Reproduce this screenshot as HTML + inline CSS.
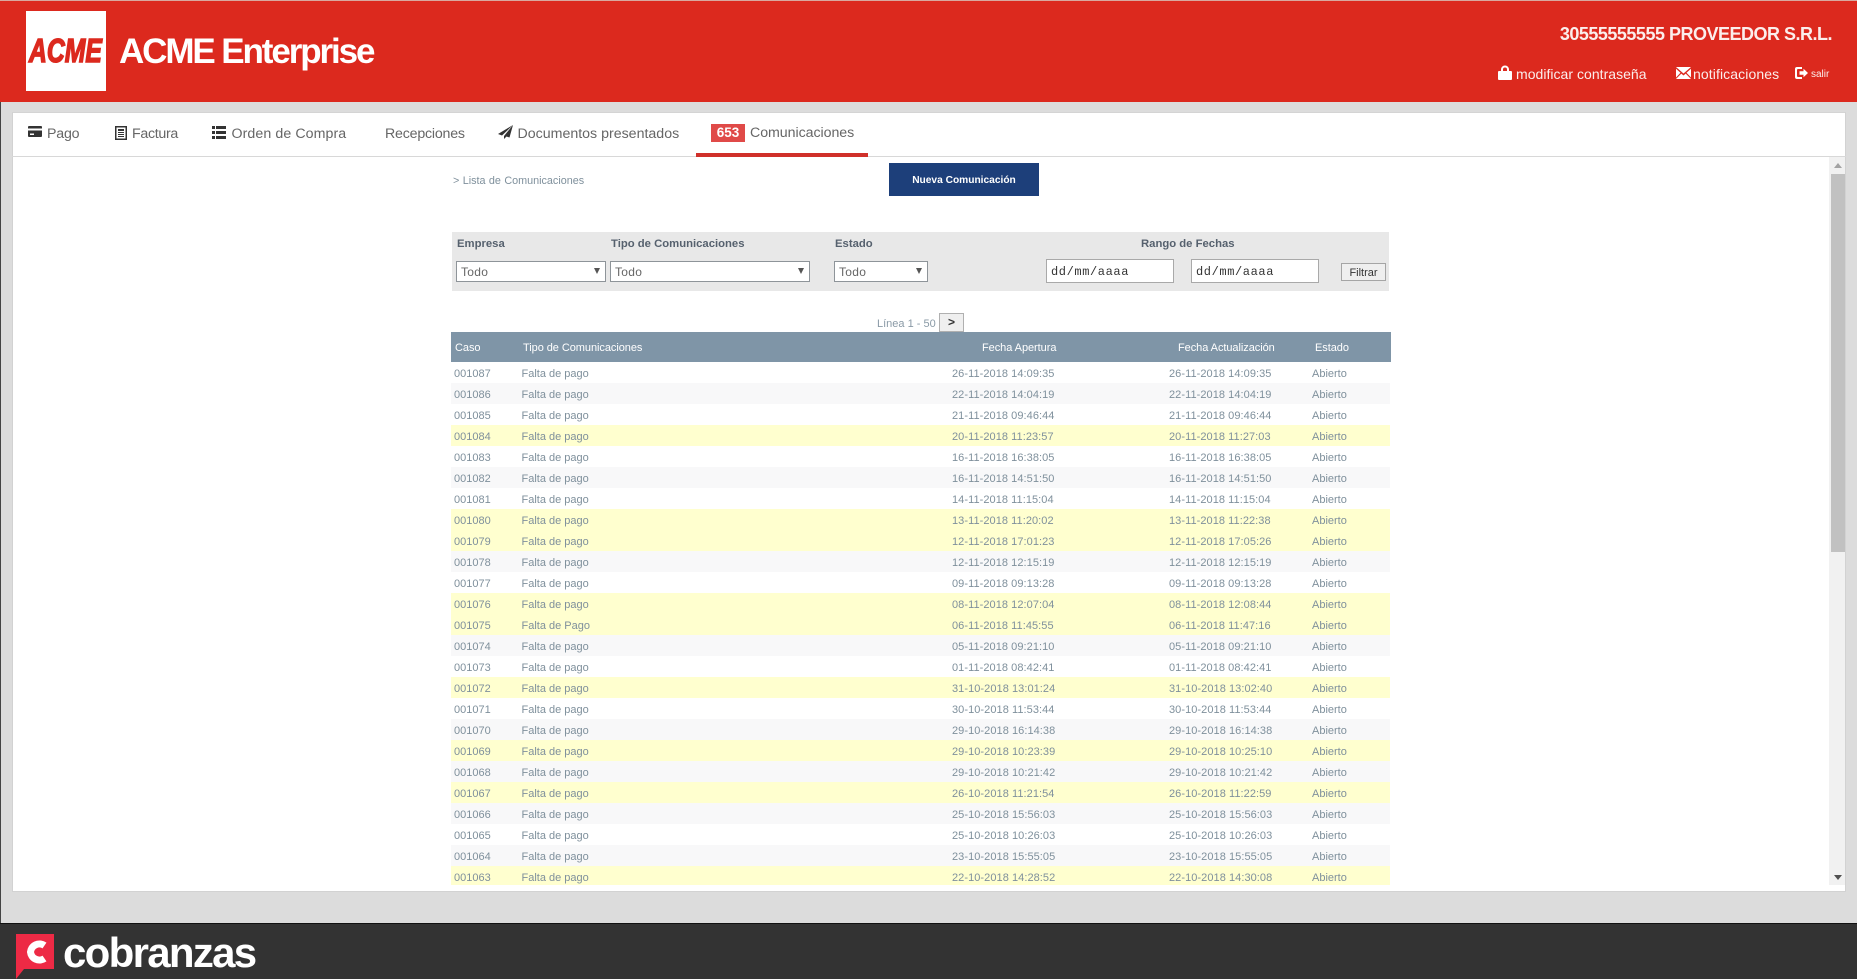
<!DOCTYPE html>
<html lang="es"><head><meta charset="utf-8"><title>ACME Enterprise</title>
<style>
*{box-sizing:border-box}
html,body{margin:0;padding:0;width:1857px;height:979px;overflow:hidden;background:#dcdcdc;font-family:"Liberation Sans",sans-serif}
.a{position:absolute;white-space:nowrap}
#top{position:absolute;left:0;top:0;width:1857px;height:102px;background:#dc291e;border-top:1px solid #d9a89f}
#edge{position:absolute;left:0;top:102px;width:1px;height:822px;background:#444}
#logo{position:absolute;left:26px;top:11px;width:80px;height:80px;background:#fff;overflow:hidden}
#panel{position:absolute;left:12px;top:112px;width:1834px;height:780px;background:#fff;border:1px solid #d2d2d2;border-top-color:#d4d4d4}
#navline{position:absolute;left:12px;top:156px;width:1834px;height:1px;background:#d8d8d8}
.tab{position:absolute;top:125px;font-size:14.2px;line-height:18px;color:#666;white-space:nowrap}
#clip{position:absolute;left:12px;top:157px;width:1818px;height:728px;overflow:hidden}
.r{position:absolute;left:439px;width:939px;height:21px;font-size:11px;line-height:21px;color:#7f909c}
.r span{position:absolute;white-space:nowrap;top:2px}
.r span:nth-child(1){left:3px}.r span:nth-child(2){left:70.500px}.r span:nth-child(3){left:501px;letter-spacing:.06px}.r span:nth-child(4){left:718px;letter-spacing:.06px}.r span:nth-child(5){left:861px}
.s{background:#f8f8f9}.y{background:#ffffcf}
.lbl{position:absolute;top:237px;font-size:11.300px;line-height:14px;font-weight:bold;color:#56616e;white-space:nowrap}
.sel{position:absolute;top:261px;height:21px;background:#fff;border:1px solid #8e9499;font-size:12px;line-height:21px;color:#666;padding-left:4px;letter-spacing:.3px}
.sel i{position:absolute;right:5px;top:6px;width:0;height:0;border-left:3.500px solid transparent;border-right:3.500px solid transparent;border-top:6px solid #555}
.dt{position:absolute;top:259px;height:24px;background:#fff;border:1px solid #a9a9a9;font-family:"Liberation Mono",monospace;font-size:12px;line-height:24px;color:#333;padding-left:4px;letter-spacing:.6px}
.th{position:absolute;top:333px;font-size:11px;line-height:30px;color:#fff;white-space:nowrap;letter-spacing:-.06px}
</style></head><body>
<div id="top"></div>
<div id="edge"></div>
<div id="logo"><div class="a" style="left:3px;top:20px;font:italic bold 33px/40px 'Liberation Sans',sans-serif;color:#dc291e;-webkit-text-stroke:1.5px #dc291e;transform:scaleX(.75);transform-origin:0 0">ACME</div></div>
<div class="a" style="left:119px;top:31px;font-size:35px;line-height:42px;font-weight:bold;color:#fff;letter-spacing:-2.1px">ACME Enterprise</div>
<div class="a" style="right:25px;top:23px;font-size:18px;line-height:22px;font-weight:bold;color:#fbeeec;letter-spacing:-.5px">30555555555 PROVEEDOR S.R.L.</div>

<svg class="a" style="left:1498px;top:65px" width="14" height="15" viewBox="0 0 14 15"><path fill="#fff" d="M1 6h12a1 1 0 0 1 1 1v7a1 1 0 0 1-1 1H1a1 1 0 0 1-1-1V7a1 1 0 0 1 1-1zM3 6V4.500a4 4 0 0 1 8 0V6H9V4.500a2 2 0 0 0-4 0V6z"/></svg>
<div class="a" style="left:1516px;top:65px;font-size:14px;line-height:18px;color:#fbeeec;letter-spacing:.03px">modificar contraseña</div>
<svg class="a" style="left:1676px;top:67px" width="15" height="12" viewBox="0 0 15 12"><path fill="#fff" d="M0 0h15L7.500 6.500zM0 1.800 4.500 5.800 0 10.500zM15 1.800 10.500 5.800 15 10.500zM0 12l5.300-5.400 2.200 1.900 2.200-1.900L15 12z"/></svg>
<div class="a" style="left:1693px;top:65px;font-size:14px;line-height:18px;color:#fbeeec;letter-spacing:.1px">notificaciones</div>
<svg class="a" style="left:1795px;top:67px" width="13" height="12" viewBox="0 0 13 12"><path fill="#fff" d="M2 0h5v2H3a1 1 0 0 0-1 1v6a1 1 0 0 0 1 1h4v2H2a2 2 0 0 1-2-2V2a2 2 0 0 1 2-2zM4.500 4.300h4V1.700L13 6 8.500 10.300V7.700h-4z"/></svg>
<div class="a" style="left:1811px;top:68px;font-size:10px;line-height:14px;color:#fbeeec">salir</div>

<div id="panel"></div>
<div id="navline"></div>

<svg class="a" style="left:28px;top:126px" width="14" height="11" viewBox="0 0 14 11"><path fill="#333" d="M1 0h12a1 1 0 0 1 1 1v1.500H0V1a1 1 0 0 1 1-1zM0 4.500h14V10a1 1 0 0 1-1 1H1a1 1 0 0 1-1-1zM2 7.500v1.500h4V7.500z"/></svg>
<div class="tab" style="left:47px;letter-spacing:-.2px">Pago</div>
<svg class="a" style="left:115px;top:126px" width="12" height="14" viewBox="0 0 12 14"><path fill="#333" fill-rule="evenodd" d="M0 0h12v14H0zM1.500 1.500v11h9v-11zM3 3h6v2H3zM3 6h6v1H3zM3 8h6v1H3zM3 10h6v1H3z"/></svg>
<div class="tab" style="left:132px;letter-spacing:-.3px">Factura</div>
<svg class="a" style="left:212px;top:126px" width="14" height="13" viewBox="0 0 14 13"><path fill="#333" d="M0 0h3v3H0zM4 0h10v3H4zM0 5h3v3H0zM4 5h10v3H4zM0 10h3v3H0zM4 10h10v3H4z"/></svg>
<div class="tab" style="left:231.500px;letter-spacing:.08px">Orden de Compra</div>
<div class="tab" style="left:385px;letter-spacing:-.2px">Recepciones</div>
<svg class="a" style="left:498px;top:125px" width="15" height="14" viewBox="0 0 15 14"><path fill="#333" d="M15 0 0 9l4 1.500zM15 0 6 11l0 3 2.500-2.500 3 1z"/></svg>
<div class="tab" style="left:517.500px">Documentos presentados</div>
<div class="a" style="left:711px;top:124px;width:34px;height:18px;background:#e04a48;color:#fff;font-size:13.500px;font-weight:bold;line-height:18px;text-align:center">653</div>
<div class="tab" style="left:750px;top:124px;letter-spacing:-.05px">Comunicaciones</div>
<div class="a" style="left:696px;top:153px;width:172px;height:4px;background:#d0302a"></div>

<div class="a" style="left:453px;top:174px;font-size:10.800px;line-height:14px;color:#7f909c;word-spacing:.4px">&gt; Lista de Comunicaciones</div>
<div class="a" style="left:889px;top:163px;width:150px;height:33px;background:#1d3f7a;color:#fff;font-size:10.200px;font-weight:bold;line-height:36px;text-align:center">Nueva Comunicación</div>

<div class="a" style="left:452px;top:232px;width:937px;height:59px;background:#e8e8e8"></div>
<div class="lbl" style="left:457px">Empresa</div>
<div class="lbl" style="left:611px">Tipo de Comunicaciones</div>
<div class="lbl" style="left:835px">Estado</div>
<div class="lbl" style="left:1141px">Rango de Fechas</div>
<div class="sel" style="left:456px;width:150px">Todo<i></i></div>
<div class="sel" style="left:610px;width:200px">Todo<i></i></div>
<div class="sel" style="left:834px;width:94px">Todo<i></i></div>
<div class="dt" style="left:1046px;width:128px">dd/mm/aaaa</div>
<div class="dt" style="left:1191px;width:128px">dd/mm/aaaa</div>
<div class="a" style="left:1341px;top:263px;width:45px;height:18px;background:#efefef;border:1px solid #a5a5a5;font-size:11px;line-height:18px;text-align:center;color:#333">Filtrar</div>

<div class="a" style="left:877px;top:317px;font-size:11px;line-height:14px;color:#8a9aa6">Línea 1 - 50</div>
<div class="a" style="left:939px;top:313px;width:25px;height:19px;background:#efefef;border:1px solid #b0b0b0;font-size:12px;font-weight:bold;line-height:17px;text-align:center;color:#333">&gt;</div>

<div class="a" style="left:451px;top:332px;width:940px;height:30px;background:#7f95a7"></div>
<div class="th" style="left:455px">Caso</div>
<div class="th" style="left:523px">Tipo de Comunicaciones</div>
<div class="th" style="left:982px">Fecha Apertura</div>
<div class="th" style="left:1178px">Fecha Actualización</div>
<div class="th" style="left:1315px">Estado</div>

<div id="clip">
<div class="r" style="top:205px"><span>001087</span><span>Falta de pago</span><span>26-11-2018 14:09:35</span><span>26-11-2018 14:09:35</span><span>Abierto</span></div>
<div class="r s" style="top:226px"><span>001086</span><span>Falta de pago</span><span>22-11-2018 14:04:19</span><span>22-11-2018 14:04:19</span><span>Abierto</span></div>
<div class="r" style="top:247px"><span>001085</span><span>Falta de pago</span><span>21-11-2018 09:46:44</span><span>21-11-2018 09:46:44</span><span>Abierto</span></div>
<div class="r y" style="top:268px"><span>001084</span><span>Falta de pago</span><span>20-11-2018 11:23:57</span><span>20-11-2018 11:27:03</span><span>Abierto</span></div>
<div class="r" style="top:289px"><span>001083</span><span>Falta de pago</span><span>16-11-2018 16:38:05</span><span>16-11-2018 16:38:05</span><span>Abierto</span></div>
<div class="r s" style="top:310px"><span>001082</span><span>Falta de pago</span><span>16-11-2018 14:51:50</span><span>16-11-2018 14:51:50</span><span>Abierto</span></div>
<div class="r" style="top:331px"><span>001081</span><span>Falta de pago</span><span>14-11-2018 11:15:04</span><span>14-11-2018 11:15:04</span><span>Abierto</span></div>
<div class="r y" style="top:352px"><span>001080</span><span>Falta de pago</span><span>13-11-2018 11:20:02</span><span>13-11-2018 11:22:38</span><span>Abierto</span></div>
<div class="r y" style="top:373px"><span>001079</span><span>Falta de pago</span><span>12-11-2018 17:01:23</span><span>12-11-2018 17:05:26</span><span>Abierto</span></div>
<div class="r s" style="top:394px"><span>001078</span><span>Falta de pago</span><span>12-11-2018 12:15:19</span><span>12-11-2018 12:15:19</span><span>Abierto</span></div>
<div class="r" style="top:415px"><span>001077</span><span>Falta de pago</span><span>09-11-2018 09:13:28</span><span>09-11-2018 09:13:28</span><span>Abierto</span></div>
<div class="r y" style="top:436px"><span>001076</span><span>Falta de pago</span><span>08-11-2018 12:07:04</span><span>08-11-2018 12:08:44</span><span>Abierto</span></div>
<div class="r y" style="top:457px"><span>001075</span><span>Falta de Pago</span><span>06-11-2018 11:45:55</span><span>06-11-2018 11:47:16</span><span>Abierto</span></div>
<div class="r s" style="top:478px"><span>001074</span><span>Falta de pago</span><span>05-11-2018 09:21:10</span><span>05-11-2018 09:21:10</span><span>Abierto</span></div>
<div class="r" style="top:499px"><span>001073</span><span>Falta de pago</span><span>01-11-2018 08:42:41</span><span>01-11-2018 08:42:41</span><span>Abierto</span></div>
<div class="r y" style="top:520px"><span>001072</span><span>Falta de pago</span><span>31-10-2018 13:01:24</span><span>31-10-2018 13:02:40</span><span>Abierto</span></div>
<div class="r" style="top:541px"><span>001071</span><span>Falta de pago</span><span>30-10-2018 11:53:44</span><span>30-10-2018 11:53:44</span><span>Abierto</span></div>
<div class="r s" style="top:562px"><span>001070</span><span>Falta de pago</span><span>29-10-2018 16:14:38</span><span>29-10-2018 16:14:38</span><span>Abierto</span></div>
<div class="r y" style="top:583px"><span>001069</span><span>Falta de pago</span><span>29-10-2018 10:23:39</span><span>29-10-2018 10:25:10</span><span>Abierto</span></div>
<div class="r s" style="top:604px"><span>001068</span><span>Falta de pago</span><span>29-10-2018 10:21:42</span><span>29-10-2018 10:21:42</span><span>Abierto</span></div>
<div class="r y" style="top:625px"><span>001067</span><span>Falta de pago</span><span>26-10-2018 11:21:54</span><span>26-10-2018 11:22:59</span><span>Abierto</span></div>
<div class="r s" style="top:646px"><span>001066</span><span>Falta de pago</span><span>25-10-2018 15:56:03</span><span>25-10-2018 15:56:03</span><span>Abierto</span></div>
<div class="r" style="top:667px"><span>001065</span><span>Falta de pago</span><span>25-10-2018 10:26:03</span><span>25-10-2018 10:26:03</span><span>Abierto</span></div>
<div class="r s" style="top:688px"><span>001064</span><span>Falta de pago</span><span>23-10-2018 15:55:05</span><span>23-10-2018 15:55:05</span><span>Abierto</span></div>
<div class="r y" style="top:709px"><span>001063</span><span>Falta de pago</span><span>22-10-2018 14:28:52</span><span>22-10-2018 14:30:08</span><span>Abierto</span></div>
</div>

<div class="a" style="left:1829px;top:157px;width:16px;height:728px;background:#f1f1f1"></div>
<div class="a" style="left:1831px;top:174px;width:14px;height:378px;background:#c1c1c1"></div>
<div class="a" style="left:1834px;top:163px;width:0;height:0;border-left:4px solid transparent;border-right:4px solid transparent;border-bottom:5px solid #a3a3a3"></div>
<div class="a" style="left:1834px;top:875px;width:0;height:0;border-left:4px solid transparent;border-right:4px solid transparent;border-top:5px solid #505050"></div>

<div class="a" style="left:0;top:923px;width:1857px;height:56px;background:#333;border-top:1px solid #111"></div>
<svg class="a" style="left:16px;top:934px" width="38" height="45" viewBox="0 0 38 45"><path fill="#ed2a45" d="M0 0h38v35H8L0 45z"/><path fill="none" stroke="#fff" stroke-width="7" d="M28.500 11.500a9 9 0 0 0-14 6.500 9 9 0 0 0 14 6.500"/></svg>
<div class="a" style="left:63px;top:929px;font-size:42px;line-height:48px;font-weight:bold;color:#fff;letter-spacing:-1.7px">cobranzas</div>
</body></html>
